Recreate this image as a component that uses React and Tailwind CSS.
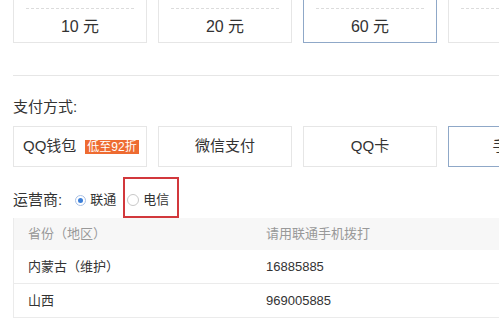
export default function App() {
  const amounts = [
    { v: '10 元', on: false },
    { v: '20 元', on: false },
    { v: '60 元', on: true },
    { v: '', on: false },
  ]
  const pays = [
    { name: '微信支付', on: false },
    { name: 'QQ卡', on: false },
    { name: '手机卡', on: true },
  ]
  const rows = [
    ['内蒙古（维护）', '16885885'],
    ['山西', '969005885'],
  ]

  return (
    <div
      className="w-[499px] h-[332px] overflow-hidden bg-white text-[#333]"
      style={{ fontFamily: '"Liberation Sans", "Noto Sans CJK SC", sans-serif' }}
    >
      {/* 金额卡片 */}
      <div className="flex gap-[11px] pl-[13px] -mt-[17px]">
        {amounts.map((a, i) => (
          <div
            key={i}
            className={`w-[134px] h-[60px] shrink-0 flex flex-col border ${
              a.on ? 'border-[#8fa8c8]' : 'border-[#e6e6e6]'
            }`}
          >
            <div className="h-[25px] mx-[12px] border-b border-dashed border-[#dcdcdc]"></div>
            <div className="flex-1 flex items-center justify-center text-[16px] pt-[3px]">
              {a.v}
            </div>
          </div>
        ))}
      </div>

      <div className="ml-[13px] mt-[32px] border-t border-[#e6e6e6]"></div>

      {/* 支付方式 */}
      <div className="ml-[13px] mt-[21px] h-[20px] leading-[20px] text-[15px]">支付方式:</div>
      <div className="flex gap-[11px] pl-[13px] mt-[9px]">
        <div className="w-[134px] h-[41px] shrink-0 border border-[#e6e6e6] flex items-center pl-[9px] text-[15px]">
          <span>QQ钱包</span>
          <span className="ml-[9px] bg-[#ee6b31] text-white text-[12px] leading-[14px] px-[2px]">低至92折</span>
        </div>
        {pays.map((p) => (
          <div
            key={p.name}
            className={`w-[134px] h-[41px] shrink-0 border flex items-center justify-center text-[15px] ${
              p.on ? 'border-[#8fa8c8]' : 'border-[#e6e6e6]'
            }`}
          >
            {p.name}
          </div>
        ))}
      </div>

      {/* 运营商 */}
      <div className="ml-[13px] mt-[23px] h-[20px] flex items-center">
        <span className="text-[15px] leading-[20px]">运营商:</span>
        <span className="ml-[13px] w-[11px] h-[11px] rounded-full border border-[#a9c1e6] flex items-center justify-center">
          <span className="w-[5px] h-[5px] rounded-full bg-[#3d7fd8]"></span>
        </span>
        <span className="ml-[4px] text-[13px]">联通</span>
        <span className="relative ml-[11px] flex items-center">
          <span className="w-[12px] h-[12px] rounded-full border border-[#c8c8c8]"></span>
          <span className="ml-[4px] text-[13px]">电信</span>
          <span className="absolute -left-[4px] -right-[10px] -top-[13px] -bottom-[8px] border-2 border-[#d2383c]"></span>
        </span>
      </div>

      {/* 号码表 */}
      <div className="ml-[13px] mt-[8px] w-[560px] border-l border-[#ebebeb] text-[13px]">
        <div className="grid grid-cols-[237px_1fr] h-[32px] bg-[#f7f7f7] text-[#999] items-center">
          <div className="pl-[14px]">省份（地区）</div>
          <div className="pl-[15px]">请用联通手机拨打</div>
        </div>
        {rows.map((r) => (
          <div key={r[0]} className="grid grid-cols-[237px_1fr] h-[34px] border-b border-[#ebebeb] items-center">
            <div className="pl-[14px]">{r[0]}</div>
            <div className="pl-[15px]">{r[1]}</div>
          </div>
        ))}
      </div>
    </div>
  )
}
